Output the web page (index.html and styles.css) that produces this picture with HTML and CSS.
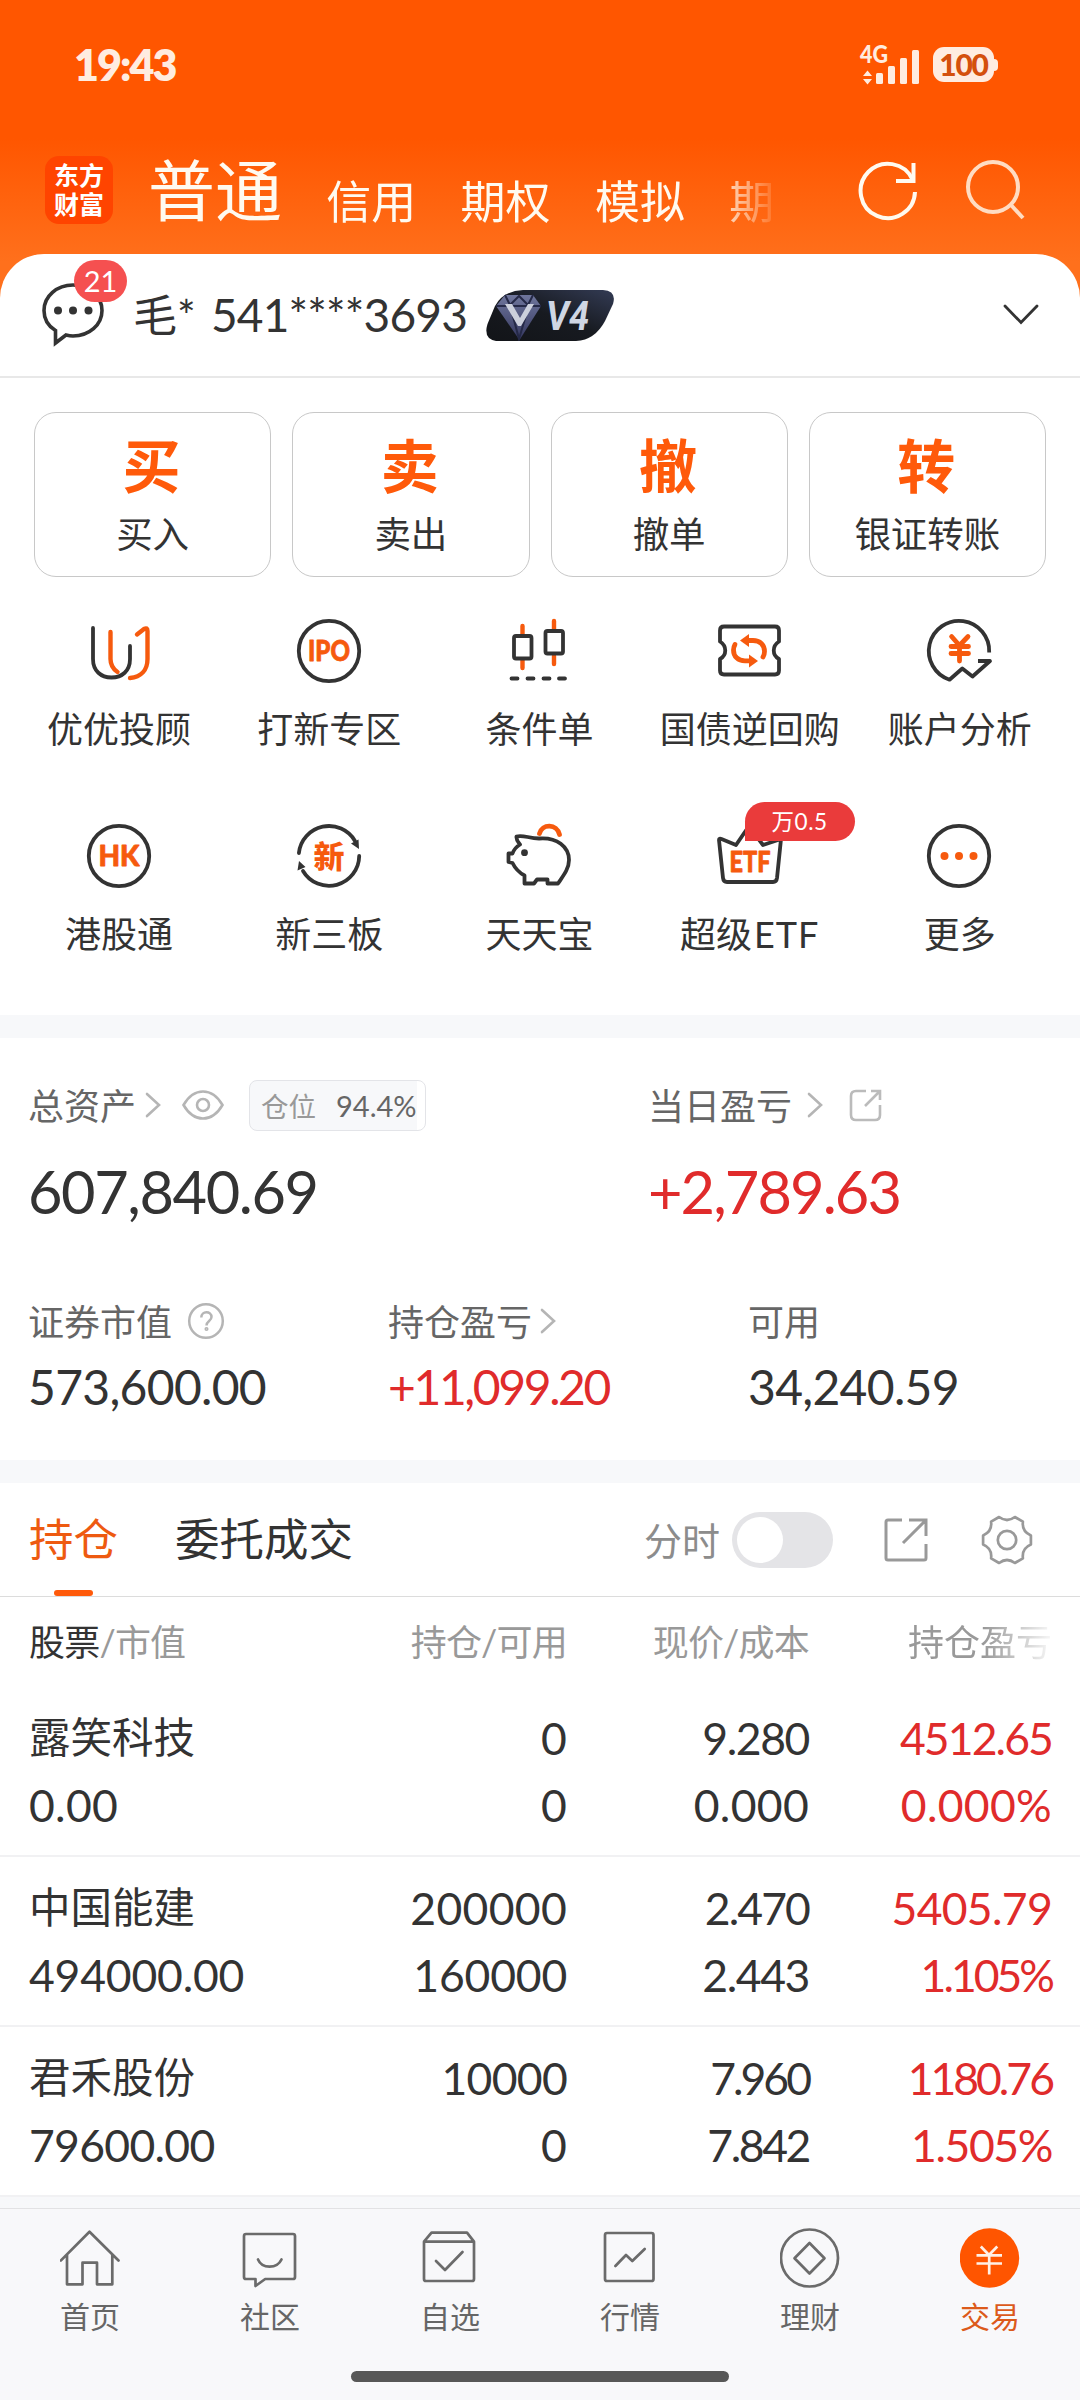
FILE: index.html
```html
<!DOCTYPE html>
<html lang="zh-CN">
<head>
<meta charset="utf-8">
<title>交易</title>
<link rel="stylesheet" href="styles.css">
</head>
<body>
<div class="app">
  <header class="header">
    <div class="status">
      <span class="status-time">19:43</span>
      <div class="status-right">
        <svg class="signal" width="62" height="54" viewBox="-2 -6 62 54">
          <text class="net" x="0" y="18.500" textLength="28" lengthAdjust="spacingAndGlyphs">4G</text>
          <path d="M3 32L7.500 26.500L12 32ZM3 35L7.500 40.500L12 35Z"/>
          <rect x="16" y="29" width="7" height="11" rx="1.500"/>
          <rect x="28" y="22" width="7" height="18" rx="1.500"/>
          <rect x="40" y="14" width="7" height="26" rx="1.500"/>
          <rect x="52" y="6" width="7" height="34" rx="1.500"/>
        </svg>
        <div class="battery">100</div>
        <div class="battery-nub"></div>
      </div>
    </div>
    <div class="tabbar">
      <div class="logo"><span>东方</span><span>财富</span></div>
      <nav class="tabs">
        <span class="tab-main">普通</span>
        <span class="tab">信用</span>
        <span class="tab">期权</span>
        <span class="tab">模拟</span>
        <span class="tab">期</span>
      </nav>
      <svg class="refresh" width="64" height="64" viewBox="0 0 64 64" fill="none" stroke="#fffaf0" stroke-width="4">
        <path d="M59 34A27.200 27.200 0 1 1 56.500 21.500"/>
        <path d="M57.500 5V23H40"/>
      </svg>
      <svg class="search" width="64" height="64" viewBox="0 0 64 64" fill="none" stroke="#ffdcc2" stroke-width="4">
        <circle cx="31" cy="29" r="25"/>
        <path d="M49 47L61 60"/>
      </svg>
    </div>
  </header>

  <main class="panel">
    <div class="user">
      <div class="msg">
        <svg width="62" height="64" viewBox="0 0 62 64" fill="none" stroke="#333" stroke-width="3.600">
          <path d="M31 2C47 2 60 13 60 27.500S47 53 31 53C28.500 53 26 52.500 24 52L13.500 60V47.500C6 43 2 36 2 27.500C2 13 15 2 31 2Z"/>
          <g fill="#333" stroke="none"><circle cx="16" cy="27.500" r="4"/><circle cx="31" cy="27.500" r="4"/><circle cx="46.500" cy="27.500" r="4"/></g>
        </svg>
        <span class="msg-count">21</span>
      </div>
      <span class="user-name">毛* <span class="acct">541****3693</span></span>
      <svg class="vip" width="128" height="51" viewBox="0 0 128 51">
        <defs>
          <linearGradient id="vipBg" x1="0" y1="1" x2="1" y2="0"><stop offset="0" stop-color="#121418"/><stop offset=".5" stop-color="#171a20"/><stop offset="1" stop-color="#333b54"/></linearGradient>
          <linearGradient id="vipGem" x1="0" y1="0" x2="0" y2="1"><stop offset="0" stop-color="#6f769c"/><stop offset="1" stop-color="#34375f"/></linearGradient>
        </defs>
        <path d="M37 0H117Q131 1 127 14L119 31Q109 50 90 51H10Q-3 49 1.500 34L9 16Q17 1 37 0Z" fill="url(#vipBg)"/>
        <path d="M19 5H47L55 16L33.500 50L10 16Z" fill="url(#vipGem)"/>
        <path d="M19 5L24 15L33 6L42 15L47 5M10 16H55M24 15L33 49L43 15" fill="none" stroke="#252947" stroke-width="2"/>
        <path d="M19 14H26L34 28L42 14H48L35 36H32Z" fill="#ccd0dc"/>
        <text class="vip-text" x="60" y="40" textLength="43" lengthAdjust="spacingAndGlyphs">V4</text>
      </svg>
      <svg class="chev-down" width="38" height="24" viewBox="0 0 38 24" fill="none" stroke="#333" stroke-width="2.800" stroke-linecap="round"><path d="M3 3L19 19.500L35 3"/></svg>
    </div>

    <div class="quick">
      <div class="quick-card"><b>买</b><span>买入</span></div>
      <div class="quick-card"><b>卖</b><span>卖出</span></div>
      <div class="quick-card"><b>撤</b><span>撤单</span></div>
      <div class="quick-card"><b>转</b><span>银证转账</span></div>
    </div>

    <div class="menu">
      <div class="menu-item">
        <svg class="ico" viewBox="0 0 72 72"><path d="M10 13V44C10 56 18 62.500 28.500 62.500S47 56 47 44V31"/><path class="o" d="M27.500 17V44C27.500 50 30 54 34.500 57M54 19.500L61 14Q64.500 12 64.500 16V44C64.500 55 58 62 47 63"/></svg>
        <span>优优投顾</span>
      </div>
      <div class="menu-item">
        <svg class="ico" viewBox="0 0 72 72"><circle cx="36" cy="36" r="30.200"/><text x="15" y="46" textLength="42" lengthAdjust="spacingAndGlyphs">IPO</text></svg>
        <span>打新专区</span>
      </div>
      <div class="menu-item">
        <svg class="ico" viewBox="0 0 72 72"><path class="o" d="M19.500 11V20M19.500 45V53M51 6V15M51 41V49"/><rect x="11" y="21" width="17.500" height="22.500" rx="2"/><rect x="42.500" y="16" width="17.500" height="22.500" rx="2"/><path d="M8.500 63.500H14.500M24.500 63.500H30.500M40.500 63.500H46.500M56 63.500H62"/></svg>
        <span>条件单</span>
      </div>
      <div class="menu-item">
        <svg class="ico" viewBox="0 0 72 72"><path d="M11 11.500H62Q66 11.500 66 15.500V26.500C59 31 59 40 66 44V55.500Q66 59.500 62 59.500H11Q7 59.500 7 55.500V44C14 40 14 31 7 26.500V15.500Q7 11.500 11 11.500Z"/><g><path class="o w" d="M34 25.500H40C47 25.500 51.500 30 51.500 36.500Q51.500 39.500 50 42"/><path class="f" d="M27 25.500L36 19V32Z"/></g><g transform="rotate(180 36 35.700)"><path class="o w" d="M34 25.500H40C47 25.500 51.500 30 51.500 36.500Q51.500 39.500 50 42"/><path class="f" d="M27 25.500L36 19V32Z"/></g></svg>
        <span>国债逆回购</span>
      </div>
      <div class="menu-item">
        <svg class="ico" viewBox="0 0 72 72"><path stroke-linecap="butt" d="M66.200 37.500A30.200 30.200 0 1 0 26.500 64.700L39.300 53.500L49.500 61.500L67 46H55"/><path class="o w" d="M28.600 21.500L36.500 30.500L45 21.500M28 31.500H45.500M28 38.500H45.500M36.500 31V46"/></svg>
        <span>账户分析</span>
      </div>
      <div class="menu-item">
        <svg class="ico" viewBox="0 0 72 72"><circle cx="36" cy="36" r="30.200"/><text x="15.500" y="46" textLength="41" lengthAdjust="spacingAndGlyphs">HK</text></svg>
        <span>港股通</span>
      </div>
      <div class="menu-item">
        <svg class="ico" viewBox="0 0 72 72"><path d="M5.900 33A30.200 30.200 0 0 1 62 21M66.200 36A30.200 30.200 0 0 1 10 51"/><path class="d" d="M66 29L58 23.500L65.500 19.500ZM6 41L12.500 47L4.500 50.500Z"/><text class="cn" x="20.500" y="47.500">新</text></svg>
        <span>新三板</span>
      </div>
      <div class="menu-item">
        <svg class="ico" viewBox="0 0 72 72"><path d="M13.500 16.500C20 14.500 26 18.500 36 18.500C54 17 66 27 66 40C66 49 60 56 55 63.500H44.500V59.500H34L31 63.500H21.500V55.500C15 52 12 48 9.500 43L5.500 42V33.500H9.500C11 29 13 27 17 24.500C15 22 13 20 13.500 16.500Z"/><circle class="d" cx="21.500" cy="32.700" r="3.400"/><path class="o w" d="M36.500 13.500C39 3.500 54 3.500 56.500 14.500"/></svg>
        <span>天天宝</span>
      </div>
      <div class="menu-item">
        <svg class="ico" viewBox="0 0 72 72"><path d="M6 20Q6 18 8.500 19L23 25L36 6L50 25L68 19L64 58Q63.500 62 60 62H14Q10.500 62 10 58Z"/><text x="16.500" y="51.500" textLength="41" lengthAdjust="spacingAndGlyphs">ETF</text></svg>
        <span>超级<em>ETF</em></span>
        <i class="promo">万0.5</i>
      </div>
      <div class="menu-item">
        <svg class="ico" viewBox="0 0 72 72"><circle cx="36" cy="36" r="30.200"/><g class="f"><circle cx="21.500" cy="36" r="4"/><circle cx="36" cy="36" r="4"/><circle cx="50.500" cy="36" r="4"/></g></svg>
        <span>更多</span>
      </div>
    </div>
  </main>

  <section class="assets">
    <div class="assets-top">
      <div class="asset total">
        <div class="label"><span class="cap">总资产</span>
          <svg class="chev" viewBox="0 0 16 26"><path d="M2 2L14 13L2 24"/></svg>
          <svg class="eye" width="42" height="30" viewBox="0 0 42 30" fill="none" stroke="#b5b5b5" stroke-width="2.600"><path d="M1.500 15C12 -3 30 -3 40.500 15C30 33 12 33 1.500 15Z"/><circle cx="21" cy="15" r="6"/></svg>
          <span class="tag"><span>仓位</span><em>94.4%</em></span>
        </div>
        <div class="big k3">607,840.69</div>
      </div>
      <div class="asset">
        <div class="label"><span class="cap">当日盈亏</span>
          <svg class="chev far" viewBox="0 0 16 26"><path d="M2 2L14 13L2 24"/></svg>
          <svg class="share" width="33" height="33" viewBox="0 0 33 33" fill="none" stroke="#bbb" stroke-width="2.600"><path d="M17 2H7Q2 2 2 7V26Q2 31 7 31H26Q31 31 31 26V16M22 2H31V11M31 2L16 17"/></svg>
        </div>
        <div class="big up k4">+2,789.63</div>
      </div>
    </div>
    <div class="assets-bottom">
      <div class="asset">
        <div class="label"><span class="cap">证券市值</span>
          <svg class="help" width="38" height="38" viewBox="0 0 38 38" fill="none" stroke="#b5b5b5" stroke-width="2.500"><circle cx="19" cy="19" r="16.800"/><path d="M14.300 15.500C14.300 8.500 24.500 8.500 24.500 15C24.500 19 19.500 19 19.500 23.500"/><circle cx="19.500" cy="27" r=".8"/></svg>
        </div>
        <div class="mid k1">573,600.00</div>
      </div>
      <div class="asset">
        <div class="label"><span class="cap">持仓盈亏</span><svg class="chev near" viewBox="0 0 16 26"><path d="M2 2L14 13L2 24"/></svg></div>
        <div class="mid up k5">+11,099.20</div>
      </div>
      <div class="asset">
        <div class="label"><span class="cap">可用</span></div>
        <div class="mid k1">34,240.59</div>
      </div>
    </div>
  </section>

  <section class="positions">
    <div class="pos-tabs">
      <span class="pos-tab active">持仓</span>
      <span class="pos-tab">委托成交</span>
      <span class="minute">分时</span>
      <span class="toggle"></span>
      <svg class="pos-share" width="46" height="46" viewBox="0 0 46 46" fill="none" stroke="#999" stroke-width="3"><path d="M19 3H5Q3 3 3 5V41Q3 43 5 43H41Q43 43 43 41V27M26 3H43V19M43 3L20 26"/></svg>
      <svg class="gear" width="54" height="54" viewBox="-27 -27 54 54" fill="none" stroke="#999" stroke-width="2.700" stroke-linejoin="round"><path d="M23.900 4.600Q14.700 8.500 15.900 18.300L7.900 23Q0 17 -7.900 23L-15.900 18.300Q-14.700 8.500 -23.900 4.600V-4.600Q-14.700 -8.500 -15.900 -18.300L-7.900 -23Q0 -17 7.900 -23L15.900 -18.300Q14.700 -8.500 23.900 -4.600Z"/><circle r="9.200"/></svg>
    </div>
    <div class="row head"><div><b>股票</b>/市值</div><div>持仓/可用</div><div>现价/成本</div><div class="fade">持仓盈亏</div></div>
    <div class="row"><div><span class="name">露笑科技</span><span>0.00</span></div><div><span>0</span><span>0</span></div><div><span class="k3">9.280</span><span>0.000</span></div><div class="up"><span class="k4">4512.65</span><span>0.000%</span></div></div>
    <div class="row"><div><span class="name">中国能建</span><span class="k0">494000.00</span></div><div><span>200000</span><span class="k0">160000</span></div><div><span class="k4">2.470</span><span class="k3">2.443</span></div><div class="up"><span class="k1">5405.79</span><span class="k6">1.105%</span></div></div>
    <div class="row"><div><span class="name">君禾股份</span><span class="k1">79600.00</span></div><div><span class="k1">10000</span><span>0</span></div><div><span class="k6">7.960</span><span class="k5">7.842</span></div><div class="up"><span class="k6">1180.76</span><span class="k3">1.505%</span></div></div>
  </section>

  <footer class="nav">
    <div class="nav-items">
      <div class="nav-item"><svg viewBox="0 0 60 60"><path d="M.800 32.500L29.500 3.700L58.500 32.500M7 27V56.300H22.500V34.700H37V56.300H52.300V27"/></svg><span>首页</span></div>
      <div class="nav-item"><svg viewBox="0 0 60 60"><path d="M6 6H53Q55 6 55 8V49Q55 51 53 51H25.200L15.500 58V51H6Q4 51 4 49V8Q4 6 6 6Z"/><path d="M18 31.500C22 41 37 41 41.500 31.500"/></svg><span>社区</span></div>
      <div class="nav-item"><svg viewBox="0 0 60 60"><path d="M4 13.700L11.500 4.700H47L54 13.700V51Q54 53 52 53H6Q4 53 4 51ZM4 13.700H54M16 33L25 42L42.500 24"/></svg><span>自选</span></div>
      <div class="nav-item"><svg viewBox="0 0 60 60"><rect x="5" y="5" width="48.500" height="48" rx="2"/><path d="M15.400 38L26 27L32.300 33L44.700 21"/></svg><span>行情</span></div>
      <div class="nav-item"><svg viewBox="0 0 60 60"><circle cx="29.500" cy="30" r="28.500"/><path d="M29.500 15L44.500 30.300L29.500 45.500L14.500 30.300Z"/></svg><span>理财</span></div>
      <div class="nav-item on"><svg viewBox="0 0 60 60"><circle cx="29.500" cy="30" r="29.700" fill="#f50" stroke="none"/><path stroke="#fff0e6" stroke-linecap="butt" d="M20.800 18.500L29 27L37.300 18.500M16.500 27.300H42M16.500 35.500H42M29.200 27V46.500"/></svg><span>交易</span></div>
    </div>
    <div class="home-bar"></div>
  </footer>
</div>
</body>
</html>
```

FILE: styles.css
```css
* { box-sizing: border-box; }
body {
  margin: 0;
  font-family: Lato, "Noto Sans CJK SC", sans-serif;
  color: #333;
  background: #f7f8fa;
}
svg { display: block; flex: none; }
.app {
  width: 1080px;
  height: 2400px;
  display: flex;
  flex-direction: column;
  overflow: hidden;
  background: linear-gradient(#ff5600 0, #ff5600 138px, #ff701c 262px, #ff701c 320px, #f7f8fa 320px);
}

/* header */
.header { height: 254px; flex: none; }
.status {
  height: 129px;
  padding: 0 82px 0 74px;
  display: flex;
  align-items: center;
  justify-content: space-between;
  color: #ffece0;
}
.status-time { font-size: 43px; font-weight: 800; letter-spacing: -1.9px; }
.status-right { display: flex; align-items: center; }
.signal { fill: #ffece0; margin-right: 13px; }
.net { font: 900 24px Lato, sans-serif; }
.battery {
  width: 61px;
  height: 35px;
  border-radius: 11px;
  background: #ffece0;
  color: #d4500c;
  font-size: 30px;
  font-weight: 900;
  line-height: 34px;
  letter-spacing: -1.3px;
  text-align: center;
}
.battery-nub { width: 4px; height: 12px; border-radius: 0 4px 4px 0; background: #ffece0; }
.tabbar { height: 122px; display: flex; align-items: center; padding-left: 45px; }
.logo {
  width: 68px;
  height: 68px;
  border-radius: 14px;
  background: #ff4400;
  color: #fff;
  font-size: 25px;
  font-weight: 700;
  line-height: 29px;
  padding-top: 5px;
  text-align: center;
}
.logo span { display: block; }
.tabs {
  width: 640px;
  margin-left: 35px;
  display: flex;
  align-items: center;
  gap: 44.3px;
  white-space: nowrap;
  color: #fffaf0;
  -webkit-mask-image: linear-gradient(90deg, #000 88%, transparent 99%);
  mask-image: linear-gradient(90deg, #000 88%, transparent 99%);
}
.tab-main { font-size: 67px; line-height: 90px; }
.tab { font-size: 45px; line-height: 60px; padding-top: 23px; }
.refresh { margin-left: 68px; }
.search { margin-left: 42px; }

/* account panel */
.panel { height: 761px; flex: none; background: #fff; border-radius: 44px 44px 0 0; }
.user {
  height: 124px;
  border-bottom: 2px solid #e8e8e8;
  display: flex;
  align-items: center;
  padding: 0 40px 0 42px;
}
.msg { position: relative; }
.msg-count {
  position: absolute;
  left: 32px;
  top: -23px;
  width: 53px;
  height: 42px;
  border-radius: 21px;
  background: #f55050;
  color: #fff;
  font-size: 29px;
  line-height: 41px;
  text-align: center;
}
.user-name { margin-left: 29px; width: 353px; font-size: 44px; white-space: pre; line-height: 60px; }
.acct { font-size: 46px; margin-left: 4px; letter-spacing: -.8px; }
.vip-text { font: italic 700 40px Roboto, sans-serif; fill: #cfd6e4; }
.chev-down { margin-left: auto; }

.quick {
  display: grid;
  grid-template-columns: repeat(4, 1fr);
  gap: 21px;
  padding: 34px 34px 0;
}
.quick-card {
  height: 165px;
  border: 1px solid #c8c8c8;
  border-radius: 22px;
  display: flex;
  flex-direction: column;
  align-items: center;
}
.quick-card b { font-size: 58px; font-weight: 700; line-height: 70px; margin-top: 18px; margin-right: 2px; color: #ff5a0a; }
.quick-card span { font-size: 36.5px; line-height: 44px; margin-top: 11px; }

.menu { display: grid; grid-template-columns: repeat(5, 210.2px); padding: 38px 0 0 14px; }
.menu-item { position: relative; height: 204.7px; display: flex; flex-direction: column; align-items: center; }
.menu-item span { font-size: 36px; line-height: 44px; margin-top: 20px; white-space: nowrap; }
.menu-item em { font-style: normal; letter-spacing: 1px; margin-left: 2px; }
.ico { width: 72px; height: 72px; margin-right: 1px; fill: none; stroke: #333; stroke-width: 3.8; stroke-linecap: round; stroke-linejoin: round; }
.ico .o { stroke: #f65a0e; stroke-width: 4.4; }
.ico .w { stroke-width: 4.8; }
.ico .f { fill: #f65a0e; stroke: none; }
.ico .d { fill: #333; stroke: none; }
.ico text { font: 900 28px Lato, sans-serif; fill: #f65a0e; stroke: #f65a0e; stroke-width: .8; }
.ico .cn { font: 900 31px "Noto Sans CJK SC", sans-serif; stroke: none; }
.promo {
  position: absolute;
  left: 100px;
  top: -18px;
  width: 110px;
  height: 39px;
  border-radius: 20px 20px 20px 0;
  background: #ea3b3b;
  color: #fff;
  font-size: 22.5px;
  font-style: normal;
  line-height: 39px;
  letter-spacing: .5px;
  text-align: center;
}

/* asset summary */
.assets { height: 422px; flex: none; margin-top: 23px; background: #fff; padding: 42px 29px 0; }
.label { display: flex; align-items: center; height: 50px; font-size: 36px; color: #666; white-space: nowrap; }
.cap { margin-left: -1px; padding-bottom: 3px; }
.chev { width: 16px; height: 26px; margin-left: 9px; fill: none; stroke: #b5b5b5; stroke-width: 2.6; stroke-linecap: round; }
.chev.far { margin-left: 15px; }
.chev.near { margin-left: 8px; }
.eye { margin-left: 21px; }
.tag {
  width: 177px;
  height: 51px;
  margin-left: 25px;
  border: 1px solid #e3e4e8;
  border-radius: 8px;
  background: linear-gradient(90deg, #f7f8fa 167px, #fff 167px);
  display: flex;
  align-items: center;
  padding-left: 11px;
  font-size: 27.5px;
  color: #999;
}
.tag em { margin-left: 20px; font-style: normal; font-size: 29px; color: #666; }
.share { margin-left: 26px; }
.help { margin-left: 15px; }
.assets-top, .assets-bottom { display: flex; }
.assets-top .asset.total { width: 620px; }
.assets-bottom { padding-top: 66px; }
.assets-bottom .asset { width: 360px; flex: none; }
.big { height: 100px; line-height: 72px; padding-top: 25px; margin-left: -1px; font-size: 59.5px; }
.mid { line-height: 60px; padding-top: 11px; margin-left: -1px; font-size: 48px; }
.up { color: #e02b2b; }

.k0 { letter-spacing: -.2px !important; }
.k1 { letter-spacing: -.7px !important; }
.k3 { letter-spacing: -1.4px !important; }
.k4 { letter-spacing: -1.9px !important; }
.k5 { letter-spacing: -2.4px !important; }
.k6 { letter-spacing: -3px !important; }

/* positions */
.positions { height: 714px; flex: none; margin-top: 23px; background: #fff; }
.pos-tabs {
  height: 114px;
  border-bottom: 1px solid #dcdcdc;
  display: flex;
  align-items: center;
  padding-left: 29px;
}
.pos-tab { position: relative; font-size: 44.5px; line-height: 111px; height: 113px; margin-right: 57px; white-space: nowrap; }
.pos-tab.active { color: #ee5a10; }
.pos-tab.active::after {
  content: "";
  position: absolute;
  left: 25px;
  bottom: 0;
  width: 39px;
  height: 6px;
  border-radius: 3px;
  background: #ff5a0a;
}
.minute { margin-left: auto; padding-bottom: 3px; font-size: 38px; color: #8c8c8c; }
.toggle { width: 101px; height: 56px; margin-left: 12px; border-radius: 28px; background: #e4e4e7; padding: 5px; }
.toggle::before { content: ""; display: block; width: 46px; height: 46px; border-radius: 50%; background: #fff; }
.pos-share { margin-left: 50px; }
.gear { margin-left: 51px; margin-right: 46px; }
.row {
  display: grid;
  grid-template-columns: 297px 241px 242px 243px;
  padding-left: 29px;
  height: 170px;
  border-bottom: 2px solid #f1f1f3;
  font-size: 44.5px;
  letter-spacing: .3px;
}
.row > div { text-align: right; padding-top: 17px; }
.row > div:first-child { text-align: left; white-space: nowrap; }
.row span { display: block; line-height: 67px; height: 67px; }
.row .name { font-size: 41.5px; letter-spacing: 0; }
.row.head { height: 90px; border: 0; font-size: 36px; color: #999; letter-spacing: -.8px; }
.row.head > div { padding-top: 0; line-height: 90px; white-space: nowrap; }
.row.head b { font-weight: 400; color: #333; }
.row.head .fade {
  letter-spacing: 0;
  -webkit-mask-image: linear-gradient(90deg, #000 72%, transparent 102%);
  mask-image: linear-gradient(90deg, #000 72%, transparent 102%);
}

/* bottom navigation */
.nav { height: 192px; flex: none; margin-top: 11px; border-top: 1px solid #e2e2e4; background: #f8f8fa; }
.nav-items { display: grid; grid-template-columns: repeat(6, 180px); padding-top: 19px; height: 162px; }
.nav-item { display: flex; flex-direction: column; align-items: center; font-size: 30px; color: #666; }
.nav-item span { line-height: 40px; margin-top: 8px; }
.nav-item svg { width: 60px; height: 60px; fill: none; stroke: #6b6b6b; stroke-width: 2.7; stroke-linecap: round; stroke-linejoin: round; }
.nav-item.on { color: #dc5a1a; }
.home-bar { width: 378px; height: 11px; margin: 0 auto; border-radius: 6px; background: #575757; }
```
